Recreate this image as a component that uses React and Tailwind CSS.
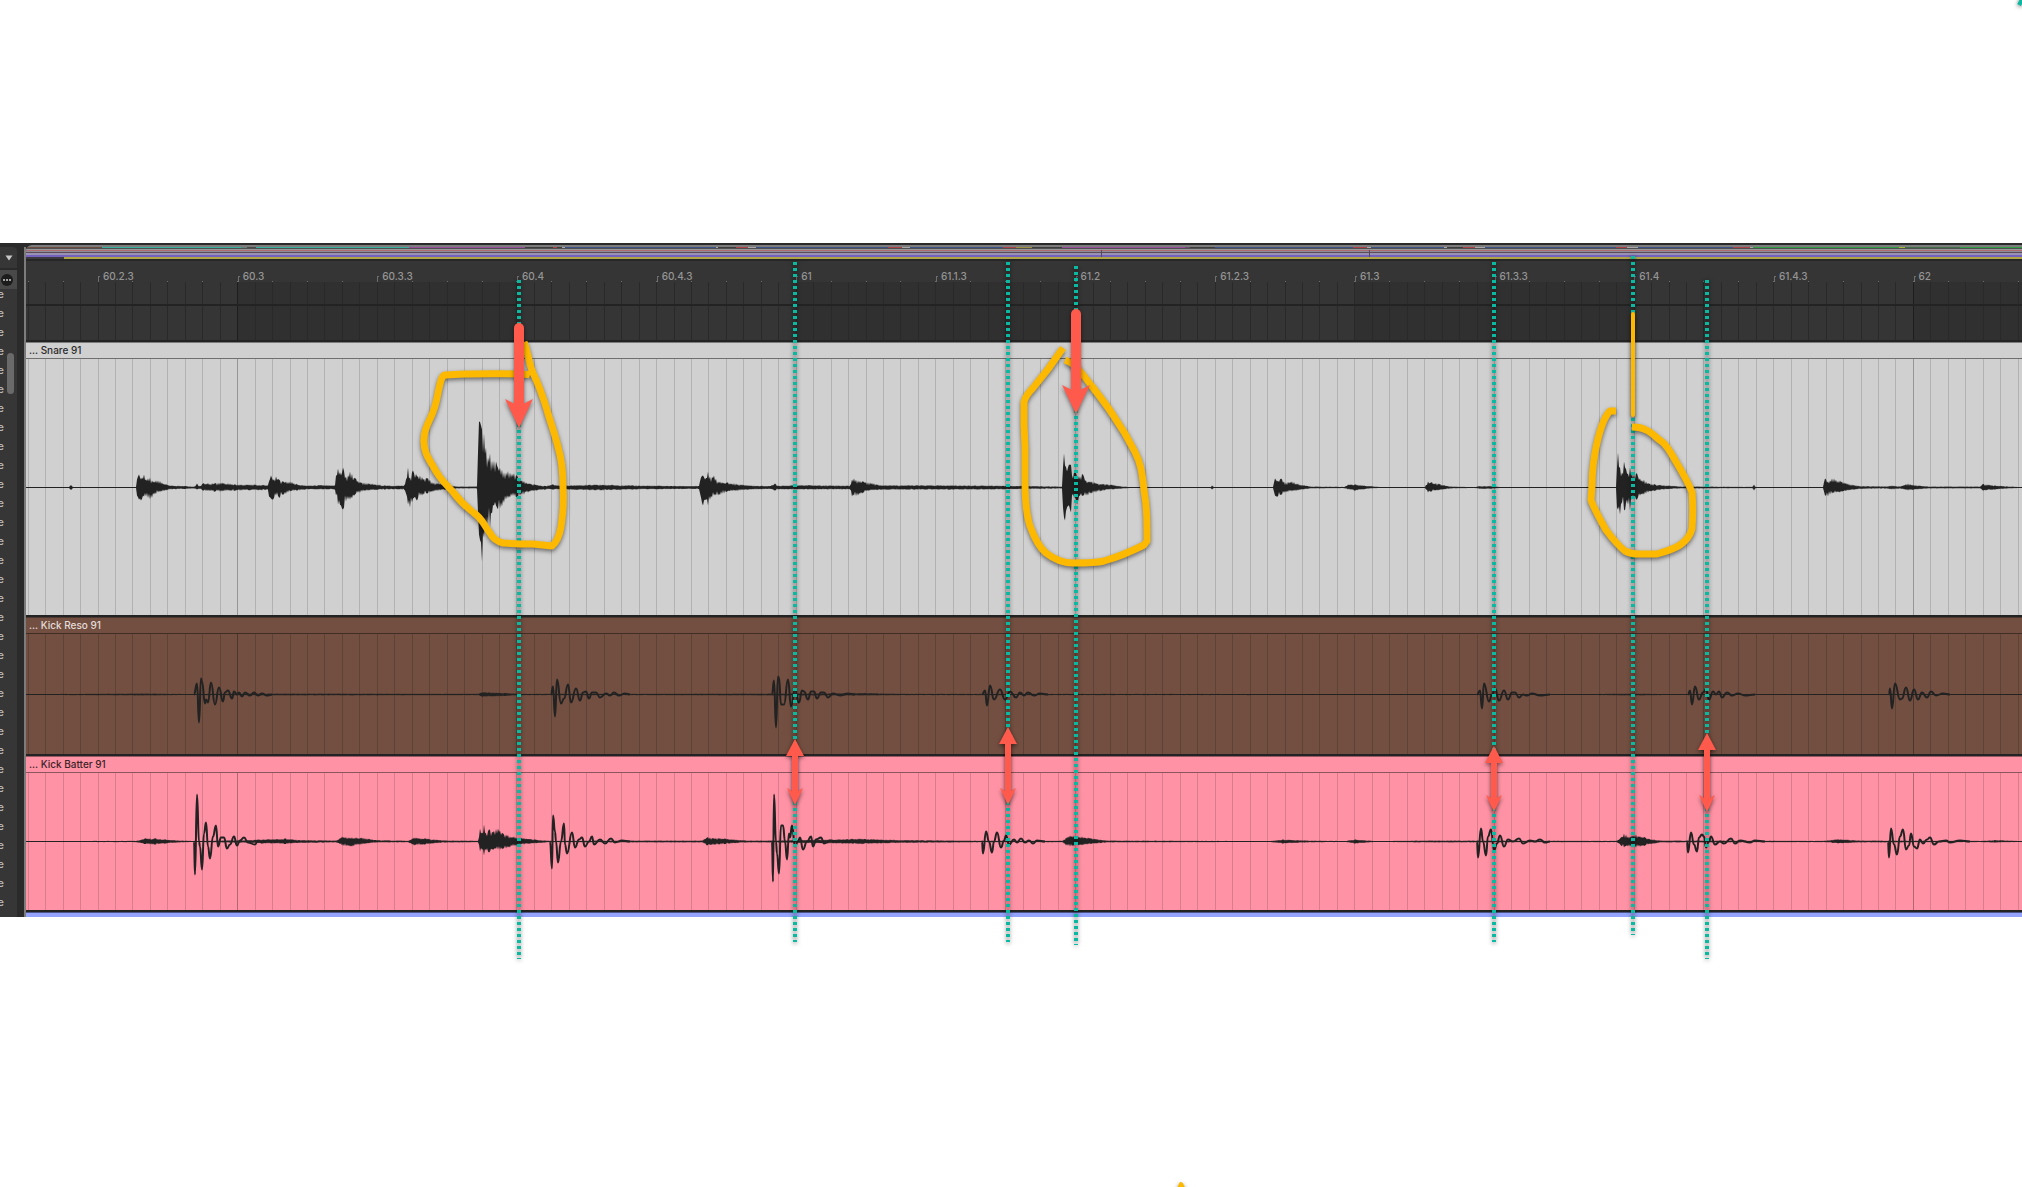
const LEFT = 26;
const WIDTH = 1996;
const FIRST_BEAT = 98;
const BEAT = 139.65;

const BEATS = [
  '60.2.3', '60.3', '60.3.3', '60.4', '60.4.3', '61', '61.1.3',
  '61.2', '61.2.3', '61.3', '61.3.3', '61.4', '61.4.3', '62',
];

// [x, peak above, peak below] key points of a noisy envelope
const SNARE = [
  [26, 0.5, 0.5], [69, 0.5, 0.5], [71, 2.5, 2.5], [73, 0.5, 0.5],
  [136, 0.5, 0.5], [137, 8, 8], [139, 13, 12], [141, 8, 13], [144, 13, 9], [146, 8, 9], [150, 10, 12], [154, 6, 7], [158, 7, 5], [162, 5, 4], [170, 2, 2], [185, 1.5, 1.5], [195, 1, 1], [197, 4, 2], [199, 1, 1], [203, 4, 3], [215, 4, 4], [222, 5, 4], [235, 3, 3], [250, 3, 3], [268, 2.5, 2.5],
  [269, 6, 9], [271, 12, 11], [273, 7, 12], [276, 11, 8], [279, 8, 10], [283, 6, 7], [290, 6, 4], [297, 3, 3], [308, 2, 2], [320, 2.5, 2], [335, 2, 2],
  [336, 12, 8], [338, 19, 17], [341, 12, 18], [343, 20, 22], [346, 11, 14], [350, 16, 12], [355, 9, 7], [362, 5, 4], [370, 4, 3], [385, 2, 2], [404, 2, 2],
  [406, 8, 6], [408, 20, 17], [410, 10, 20], [413, 17, 11], [417, 11, 13], [420, 12, 8], [427, 9, 6], [434, 5, 4], [445, 3, 2], [455, 1, 1], [477, 1, 1],
  [478, 35, 25], [479, 66, 47], [481, 62, 55], [482, 58, 74], [484, 54, 50], [486, 40, 45], [488, 30, 38], [490, 34, 40], [492, 27, 26], [494, 27, 18], [497, 22, 20], [502, 18, 19], [506, 15, 12], [510, 15, 10], [517, 12, 9], [522, 7, 7], [530, 4, 4], [545, 1.5, 2], [553, 3, 2], [560, 2, 2], [600, 3, 3], [640, 2, 2], [699, 1.5, 1.5],
  [701, 10, 10], [703, 12, 18], [705, 8, 12], [708, 16, 18], [710, 11, 12], [714, 12, 8], [718, 6, 8], [727, 5, 4], [740, 3, 3], [752, 2, 2], [770, 1.5, 1.5], [775, 4, 3], [778, 2, 2], [800, 2.5, 2], [850, 2, 2],
  [852, 8, 9], [854, 9, 8], [858, 7, 8], [863, 6, 5], [870, 5, 3], [880, 2.5, 2.5], [1000, 2, 2], [1062, 1, 1],
  [1063, 20, 20], [1064, 34, 30], [1065, 22, 33], [1067, 16, 20], [1069, 23, 18], [1071, 23, 25], [1072, 12, 8], [1075, 15, 10], [1077, 11, 17], [1080, 11, 8], [1083, 13, 8], [1086, 7, 8], [1092, 6, 6], [1098, 4, 4], [1110, 3, 2], [1120, 1.5, 1.5], [1130, 0.5, 0.5], [1210, 0.5, 0.5], [1212, 2, 2], [1214, 0.5, 0.5], [1273, 0.5, 0.5],
  [1275, 9, 8], [1277, 6, 9], [1281, 9, 7], [1286, 5, 5], [1292, 6, 4], [1300, 3, 2.5], [1312, 1, 1], [1345, 0.7, 0.7], [1348, 3, 2], [1355, 3, 3], [1370, 1.5, 1], [1380, 0.5, 0.5], [1425, 0.5, 0.5],
  [1428, 6, 5], [1431, 5, 4], [1438, 4, 3], [1450, 1, 1], [1475, 0.5, 0.5], [1480, 1.5, 1.5], [1490, 1.5, 1.5], [1500, 0.5, 0.5], [1616, 0.5, 0.5],
  [1617, 20, 20], [1618, 35, 22], [1620, 20, 27], [1622, 15, 15], [1624, 26, 22], [1625, 20, 23], [1627, 14, 12], [1630, 20, 23], [1632, 13, 12], [1637, 14, 12], [1640, 9, 8], [1646, 6, 6], [1655, 3, 3], [1670, 2, 1.5], [1680, 1, 1], [1752, 0.7, 0.7], [1754, 3, 3], [1756, 0.5, 0.5], [1823, 0.5, 0.5],
  [1825, 9, 8], [1828, 6, 9], [1832, 9, 6], [1840, 7, 5], [1848, 4, 3], [1860, 1.5, 1.5], [1885, 1, 1], [1892, 2, 2], [1900, 1, 1], [1908, 4, 3], [1918, 2, 2], [1930, 1, 1], [1980, 1, 1], [1983, 3.5, 3], [1995, 2, 2], [2010, 1, 1], [2022, 0.5, 0.5],
];

const RESO_NOISE = [
  [26, 0.5, 0.5], [150, 1, 1], [190, 0.5, 0.5], [260, 1, 1], [478, 0.7, 0.7], [482, 2.5, 2.5], [492, 2, 2], [505, 1.5, 1.5], [520, 0.7, 0.7], [640, 0.7, 0.7], [800, 1, 1], [870, 1.5, 1], [900, 0.7, 0.7], [1590, 0.5, 0.5], [1630, 1, 1], [1670, 0.5, 0.5], [2022, 0.5, 0.5],
];

const BATTER_NOISE = [
  [26, 0.5, 0.5], [137, 0.7, 0.7], [145, 3, 2.5], [155, 3, 3], [165, 2, 2], [180, 1, 1], [195, 0.5, 0.5], [250, 1.5, 1.5], [285, 3, 2.5], [300, 1.5, 1.5], [337, 1, 1],
  [342, 5, 4], [350, 4, 5], [362, 4, 3], [375, 1.5, 1], [408, 0.8, 0.8], [414, 4, 4], [425, 3, 3], [445, 1, 1], [478, 0.8, 0.8],
  [480, 13, 10], [482, 9, 8], [484, 17, 14], [486, 8, 9], [489, 12, 11], [493, 9, 8], [498, 13, 8], [503, 8, 7], [510, 5, 6], [520, 4, 3], [540, 1.5, 1.5], [550, 0.7, 0.7], [640, 1, 1], [702, 1, 1],
  [707, 4, 4], [725, 3, 2.5], [745, 1, 1], [770, 1, 1], [830, 2, 2], [860, 3, 2.5], [900, 1.5, 1.5], [980, 0.8, 0.8], [1063, 0.8, 0.8],
  [1066, 4, 4], [1070, 6, 5], [1078, 5, 4], [1088, 4, 3], [1105, 1, 1], [1270, 0.5, 0.5], [1283, 2, 2], [1305, 1, 1], [1345, 0.5, 0.5], [1355, 2, 2], [1375, 0.5, 0.5], [1430, 1, 1], [1617, 0.7, 0.7],
  [1621, 4, 4], [1624, 8, 6], [1628, 5, 5], [1636, 7, 6], [1645, 4, 4], [1660, 1, 1], [1825, 0.7, 0.7], [1838, 2.5, 2], [1860, 1, 1], [1985, 0.7, 0.7], [1995, 1.5, 1], [2022, 0.5, 0.5],
];

// low oscillating hits, [x, height above the centre line]
const RESO_HITS = [
  [[194, 0], [197, 11], [199, -28], [201, 16], [202, 13], [205, -9], [206, -5], [208, -8], [211, 12], [215, -10], [219, 7], [223, -7], [225, 2], [228, 4], [232, -4], [234, 3], [237, 0], [239, 2], [242, -2], [245, 2], [250, -1], [254, 2], [258, -1], [262, 1], [267, -1], [272, 0]],
  [[551, 0], [553, 8], [555, -22], [557, 15], [561, -9], [564, -4], [568, 10], [571, -8], [576, 6], [580, -6], [583, 2], [586, 3], [589, -4], [592, 2], [596, 2], [600, -3], [606, 1], [610, -1], [614, 2], [619, -1], [625, 1], [630, 0]],
  [[772, 0], [774, 14], [776, -33], [778, 18], [779, 17], [781, -10], [784, -10], [788, 15], [791, -12], [795, 5], [799, -8], [802, 4], [804, 3], [808, -5], [811, 3], [814, 3], [817, -4], [821, 2], [824, 2], [828, -3], [833, 1], [840, -1], [848, 1], [855, 0]],
  [[982, 0], [985, 4], [987, -11], [990, 9], [994, -5], [1000, 5], [1005, -5], [1010, 3], [1016, -3], [1020, 2], [1024, -1], [1028, 2], [1034, -1], [1040, 1], [1048, 0]],
  [[1477, 0], [1480, 4], [1482, -14], [1484, 11], [1489, -7], [1492, 0], [1495, 6], [1499, -6], [1504, 4], [1508, -5], [1512, 2], [1515, 2], [1519, -3], [1523, 0], [1527, -1], [1532, 1], [1540, -1], [1550, 0]],
  [[1688, 0], [1690, 4], [1692, -10], [1695, 8], [1699, -5], [1703, 2], [1706, 5], [1709, -5], [1713, 3], [1716, 0], [1719, 3], [1722, -3], [1727, 2], [1732, -1], [1738, 1], [1745, -1], [1755, 0]],
  [[1889, 0], [1890, 6], [1892, -14], [1895, 11], [1900, -5], [1902, -4], [1906, 7], [1910, -6], [1914, 5], [1918, -5], [1922, 2], [1927, -3], [1931, 3], [1936, -1], [1943, 1], [1950, 0]],
];

const BATTER_HITS = [
  [[194, 0], [195, -33], [197, 47], [199, 0], [200, -5], [202, -28], [204, 8], [206, 19], [208, -5], [210, -17], [213, 5], [216, 16], [218, -5], [221, 4], [224, 4], [227, -7], [230, -3], [234, 5], [237, -4], [240, 1], [244, 4], [248, -1], [255, -3], [258, 1], [262, -1], [268, 1], [275, 0]],
  [[550, 0], [552, -27], [553, 26], [555, 10], [556, 0], [558, -21], [561, 0], [564, 18], [565, -3], [567, -12], [572, 9], [575, -6], [579, 2], [582, 4], [585, -5], [589, 0], [592, 5], [594, -3], [600, 2], [605, -2], [611, 3], [615, -1], [622, 1], [630, 0]],
  [[772, 0], [773, -40], [774, 47], [776, 0], [777, -12], [779, -32], [781, 16], [783, 16], [785, 0], [787, -18], [789, 8], [790, 4], [792, 16], [795, -5], [798, 0], [800, 4], [803, -8], [807, 0], [811, 5], [813, -5], [816, 2], [821, 4], [824, -2], [830, 1], [838, 0]],
  [[982, 0], [983, -12], [986, 10], [989, 0], [992, -11], [994, 0], [997, 9], [1001, -6], [1004, 1], [1006, 6], [1009, -3], [1014, 2], [1017, -1], [1021, 3], [1025, -1], [1029, 1], [1033, -2], [1037, 1], [1045, 0]],
  [[1477, 0], [1478, -16], [1481, 13], [1483, 0], [1486, -14], [1488, 5], [1491, 12], [1494, -9], [1497, -2], [1500, 6], [1504, -5], [1508, 2], [1513, 0], [1519, 3], [1523, -2], [1530, 1], [1535, 0], [1540, 2], [1545, -1], [1550, 0]],
  [[1687, 0], [1688, -11], [1691, 9], [1694, -3], [1697, -10], [1699, 4], [1702, 7], [1704, 5], [1706, -6], [1709, 0], [1711, 5], [1715, -3], [1720, 0], [1724, -2], [1731, 3], [1735, -2], [1740, 1], [1750, -1], [1755, 1], [1765, 0]],
  [[1888, 0], [1889, -16], [1891, 13], [1894, -3], [1897, -13], [1900, 5], [1903, 12], [1906, -8], [1909, -4], [1911, 8], [1914, -5], [1917, -7], [1920, 2], [1923, -2], [1927, 2], [1930, 4], [1934, -3], [1939, 0], [1946, 1], [1950, -1], [1960, 1], [1970, 0]],
];

const TRACKS = [
  {
    name: '... Snare 91',
    height: 256,
    center: 129,
    noise: SNARE,
    hits: [],
    gridOpacity: 0.14,
    bg: 'bg-[#d0d0d0]',
    edge: 'bg-[#7b7b7b]',
    rule: 'bg-[#6f6f6f]',
    text: 'text-[#2b2b2b]',
    body: 'h-[256px]',
  },
  {
    name: '... Kick Reso 91',
    height: 120,
    center: 61,
    noise: RESO_NOISE,
    hits: RESO_HITS,
    gridOpacity: 0.16,
    bg: 'bg-[#724f41]',
    edge: 'bg-[#4b372f]',
    rule: 'bg-[#3f2d26]',
    text: 'text-[#e4dcd9]',
    body: 'h-[120px]',
  },
  {
    name: '... Kick Batter 91',
    height: 137,
    center: 69,
    noise: BATTER_NOISE,
    hits: BATTER_HITS,
    gridOpacity: 0.15,
    bg: 'bg-[#ff93a5]',
    edge: 'bg-[#935a64]',
    rule: 'bg-[#8b545e]',
    text: 'text-[#3d2328]',
    body: 'h-[137px]',
  },
];

// [start x, colour] of the clips in the thin overview strip
const OVERVIEW = [
  [26, '#6b4a40'], [102, '#35b09c'], [241, '#67817c'], [247, '#4a4a4a'], [256, '#35b09c'], [409, '#9a4c9c'], [525, '#3c3c3c'], [553, '#b04048'], [557, '#3c3c3c'],
  [562, '#a8a8a8'], [565, '#3b5288'], [716, '#a8a8a8'], [718, '#3c3c3c'], [736, '#b04048'], [748, '#a8a8a8'], [756, '#3b5288'], [888, '#b04048'], [902, '#a8a8a8'], [910, '#3b5288'],
  [1003, '#b04048'], [1016, '#9c9140'], [1032, '#3c3c3c'], [1062, '#9a4c9c'], [1185, '#6b4a6c'], [1190, '#3c3c3c'], [1215, '#3b5288'], [1353, '#b04048'], [1367, '#a8a8a8'], [1371, '#3b5288'],
  [1444, '#a8a8a8'], [1447, '#3c3c3c'], [1463, '#b04048'], [1475, '#a8a8a8'], [1485, '#3b5288'], [1616, '#b04048'], [1627, '#a8a8a8'], [1638, '#3b5288'], [1733, '#b04048'], [1750, '#a8a8a8'],
  [1753, '#2da043'], [1899, '#a8b83a'], [1905, '#3f6f48'], [1960, '#2da043'], [2022, ''],
];

const GUIDES = [
  [519, 280, 959], [795, 262, 942], [1008, 262, 942], [1076, 266, 945],
  [1494, 262, 942], [1633, 256, 935], [1707, 280, 959],
];

const gridLines = Array.from({ length: 115 }, (_, i) => ({
  x: Math.floor(FIRST_BEAT + (i - 4) * (BEAT / 8)) + 0.5,
  major: i === 12 || i === 108,
}));

const rand = (n) => {
  const v = Math.sin(n * 12.9898) * 43758.5453;
  return v - Math.floor(v);
};

// every other sample dips, which gives the saw-toothed outline
const jag = (n) => (n % 2 ? 0.45 + 0.35 * rand(n) : 0.85 + 0.25 * rand(n));

function envelopePath(points, center) {
  const top = [];
  const bottom = [];
  let k = 0;
  for (let x = points[0][0]; x <= points[points.length - 1][0]; x += 1) {
    while (k < points.length - 2 && points[k + 1][0] <= x) k += 1;
    const [x0, u0, d0] = points[k];
    const [x1, u1, d1] = points[k + 1];
    const t = (x - x0) / (x1 - x0);
    const onKey = x === x0 || x === x1;
    const up = (u0 + (u1 - u0) * t) * (onKey ? 1 : jag(x));
    const down = (d0 + (d1 - d0) * t) * (onKey ? 1 : jag(x + 7000));
    top.push(`${x} ${(center - Math.max(up, 0.5)).toFixed(1)}`);
    bottom.unshift(`${x} ${(center + Math.max(down, 0.5)).toFixed(1)}`);
  }
  return `M${top.join('L')}L${bottom.join('L')}Z`;
}

function hitPath(points, center) {
  let d = `M${points[0][0]} ${center - points[0][1]}`;
  for (let i = 1; i < points.length; i += 1) {
    const [x0, y0] = points[i - 1];
    const [x1, y1] = points[i];
    const mid = (x0 + x1) / 2;
    d += `C${mid} ${center - y0} ${mid} ${center - y1} ${x1} ${center - y1}`;
  }
  return d;
}

function Sidebar() {
  return (
    <aside className="flex w-6 shrink-0 flex-col bg-[#2a2a2a] pt-1 pr-[7px]">
      <button type="button" aria-label="Fold" className="flex h-[21px] items-center justify-center rounded-tr-sm bg-[#363636]">
        <svg viewBox="0 0 8 6" className="h-[6px] w-2">
          <path d="M0.5 0.5H7.5L4 5.5Z" fill="#c8c8c8" />
        </svg>
      </button>
      <button type="button" aria-label="More" className="mt-0.5 flex h-[19px] items-center bg-[#494949] pl-px">
        <svg viewBox="0 0 12 12" className="h-3 w-3">
          <circle cx="6" cy="6" r="6" fill="#1c1c1c" />
          <circle cx="3" cy="6" r="1" fill="#d0d0d0" />
          <circle cx="6" cy="6" r="1" fill="#d0d0d0" />
          <circle cx="9" cy="6" r="1" fill="#d0d0d0" />
        </svg>
      </button>
      <div className="flex flex-1 bg-[#363636]">
        <ul className="w-1">
          {Array.from({ length: 33 }, (_, i) => (
            <li key={i} className="flex h-[19px] justify-end overflow-hidden text-[11px] leading-[10px] font-medium text-[#b8b8b8]">
              e
            </li>
          ))}
        </ul>
        <div className="mt-16 ml-[3px] h-[41px] w-[7px] rounded-full bg-[#6a6a6a]" />
      </div>
    </aside>
  );
}

function Overview() {
  return (
    <div className="mt-0.5 h-4 overflow-hidden rounded-tl-md bg-[#7c7c7c] pt-0.5">
      <svg viewBox={`${LEFT} 0 ${WIDTH} 14`} preserveAspectRatio="none" className="block h-[14px] w-full" shapeRendering="crispEdges">
        {OVERVIEW.slice(0, -1).map(([x, color], i) => (
          <rect key={x} x={x} y="0" width={OVERVIEW[i + 1][0] - x} height="1" fill={color} />
        ))}
        <rect x="26" y="1" width="1996" height="1" fill="#505050" />
        <rect x="26" y="2" width="1996" height="1" fill="#989898" />
        <rect x="26" y="3" width="1996" height="1" fill="#b06a72" />
        <rect x="26" y="4" width="1996" height="1" fill="#8c8c98" />
        <rect x="26" y="5" width="1996" height="1" fill="#5c4d58" />
        <rect x="26" y="6" width="1996" height="2" fill="#9a92b4" />
        <rect x="26" y="8" width="1996" height="2" fill="#7562bc" />
        <rect x="26" y="10" width="38" height="2" fill="#3a3a40" />
        <rect x="64" y="10" width="1958" height="2" fill="#b0a544" />
        <rect x="26" y="12" width="1996" height="2" fill="#262626" />
        <path d="M1101.5 3V10M1369.5 3V10" stroke="#55485f" />
      </svg>
    </div>
  );
}

function Ruler() {
  return (
    <div className="bg-[#353535]">
      <div className="flex h-[21px]">
        <div className="min-w-0 basis-0" style={{ flexGrow: FIRST_BEAT - LEFT }} />
        {BEATS.map((beat, i) => (
          <div
            key={beat}
            className="flex min-w-0 basis-0 items-end"
            style={{ flexGrow: i === BEATS.length - 1 ? LEFT + WIDTH - FIRST_BEAT - BEAT * 13 : BEAT }}
          >
            <span className="h-[6px] w-[2px] border-t border-l border-[#6e6e6e]" />
            <span className="pb-px pl-[3px] text-[10px] leading-[10px] font-medium text-[#959595]">{beat}</span>
          </div>
        ))}
      </div>
      <svg viewBox={`${LEFT} 0 ${WIDTH} 58`} preserveAspectRatio="none" className="block h-[58px] w-full overflow-visible">
        {[238, 797, 1355].map((x) => (
          <rect key={x} x={x} y="0" width="280" height="58" fill="#303030" />
        ))}
        <rect x="1914" y="0" width="108" height="58" fill="#303030" />
        {gridLines.map(({ x, major }) => (
          <path key={x} d={`M${x} 0V58`} stroke={major ? '#1e1e1e' : '#292929'} />
        ))}
        {gridLines.filter((_, i) => i % 2 === 0).map(({ x }) => (
          <path key={x} d={`M${x} 0V-1`} stroke="#6e6e6e" />
        ))}
        <rect x="26" y="22" width="1996" height="2" fill="#232323" />
      </svg>
    </div>
  );
}

function Track({ track }) {
  const { name, height, center, noise, hits, gridOpacity, bg, edge, rule, text, body } = track;
  return (
    <section className={`border-t-2 border-[#232323] ${bg}`}>
      <div className={`h-px ${edge}`} />
      <h2 className={`h-[15px] pl-[3px] text-[10px] leading-[15px] font-medium ${text}`}>{name}</h2>
      <div className={`h-px ${rule}`} />
      <svg viewBox={`${LEFT} 0 ${WIDTH} ${height}`} preserveAspectRatio="none" className={`block w-full ${body}`}>
        {gridLines.map(({ x, major }) => (
          <path key={x} d={`M${x} 0V${height}`} stroke="#000" strokeOpacity={major ? gridOpacity * 2 : gridOpacity} />
        ))}
        <path d={envelopePath(noise, center - 0.5)} fill="#222" />
        {hits.map((hit) => (
          <path
            key={hit[0][0]}
            d={hitPath(hit, center - 0.5)}
            fill="none"
            stroke="#222"
            strokeWidth="2"
            strokeLinejoin="round"
          />
        ))}
      </svg>
    </section>
  );
}

function DownArrow({ x, top, tip }) {
  return (
    <g fill="#ff5a4c">
      <path d={`M${x} ${top + 5}V${tip - 20}`} stroke="#ff5a4c" strokeWidth="10" strokeLinecap="round" />
      <path d={`M${x} ${tip}L${x - 14} ${tip - 29}L${x - 4} ${tip - 24}H${x + 4}L${x + 14} ${tip - 29}Z`} />
    </g>
  );
}

function DoubleArrow({ x, top, tip }) {
  return (
    <path
      fill="#ff5a4c"
      d={`M${x} ${top}L${x + 9} ${top + 17}H${x + 3}V${tip - 14}L${x + 8} ${tip - 17}L${x} ${tip}L${x - 8} ${tip - 17}L${x - 3} ${tip - 14}V${top + 17}H${x - 9}Z`}
    />
  );
}

function Annotations() {
  return (
    <svg viewBox="0 0 2022 1187" preserveAspectRatio="none" className="pointer-events-none absolute inset-0 h-full w-full">
      <g className="drop-shadow-[0_1px_2px_rgba(0,0,0,0.6)]" fill="none" stroke="#0bb8a0" strokeWidth="4">
        {GUIDES.map(([x, y1, y2]) => (
          <path key={x} d={`M${x} ${y1}V${y2}`} strokeDasharray="3 3" />
        ))}
        <path d="M2019 5L2024 -4" />
      </g>
      <g className="drop-shadow-[0_2px_2px_rgba(0,0,0,0.5)]" fill="none" stroke="#fdb900" strokeWidth="7" strokeLinejoin="round">
        <path d="M530 375C524 373 500 374 467 374C456 374 448 375 445 375C441 376 440 384 438 393C436 405 433 413 430 419C426 427 424 432 424 439C423 450 428 458 433 466C440 480 447 485 453 492C463 505 468 508 474 513C483 519 484 526 490 533C493 539 499 542 503 543L520 544H533L552 546C557 542 560 533 561 527C563 515 564 503 563 487C563 470 562 460 558 447C555 434 550 421 547 410C543 397 537 381 533 373C529 364 528 352 524 342" />
        <path d="M1063 348C1053 363 1044 375 1033 388C1028 393 1025 398 1024 402V425L1025 447V480C1025 495 1026 514 1030 526C1034 537 1040 548 1046 553C1055 560 1064 563 1073 563C1084 563 1096 563 1104 561C1118 557 1134 550 1144 545L1147 541C1147 520 1147 508 1144 490C1142 470 1140 462 1135 452C1129 440 1122 428 1113 415C1104 401 1093 388 1084 376C1078 369 1074 363 1065 360" />
        <path d="M1616 411H1610C1605 416 1600 430 1597 443C1594 456 1592 470 1592 486L1591 500C1594 509 1600 519 1606 530C1612 538 1620 547 1625 551C1631 554 1634 554 1638 554H1657C1664 552 1674 549 1680 545C1686 541 1690 536 1692 529C1693 515 1693 505 1692 492C1688 482 1681 470 1675 460C1670 451 1666 444 1661 441C1656 438 1652 432 1646 430C1641 427 1637 427 1632 427" />
        <path d="M1633 314V415" strokeWidth="4" strokeLinecap="round" />
        <path d="M1177 1194L1181 1184L1186 1194" strokeWidth="4" />
      </g>
      <g className="drop-shadow-[0_2px_2px_rgba(0,0,0,0.5)]">
        <DownArrow x={519} top={323} tip={428} />
        <DownArrow x={1076} top={309} tip={414} />
        <DoubleArrow x={795} top={739} tip={805} />
        <DoubleArrow x={1008} top={727} tip={805} />
        <DoubleArrow x={1494} top={746} tip={812} />
        <DoubleArrow x={1707} top={733} tip={812} />
      </g>
    </svg>
  );
}

export default function App() {
  return (
    <div className="relative min-h-screen overflow-hidden bg-white pt-[243px] font-['Inter',sans-serif]">
      <main className="flex bg-[#2a2a2a]">
        <Sidebar />
        <div className="w-0.5 shrink-0 pt-1">
          <div className="h-full bg-[#7c7c7c]" />
        </div>
        <div className="min-w-0 flex-1">
          <Overview />
          <Ruler />
          {TRACKS.map((track) => (
            <Track key={track.name} track={track} />
          ))}
          <div className="h-[7px] border-t-2 border-[#232323] bg-[#94a4fc]">
            <div className="h-px bg-[#4c5688]" />
          </div>
        </div>
      </main>
      <Annotations />
    </div>
  );
}
